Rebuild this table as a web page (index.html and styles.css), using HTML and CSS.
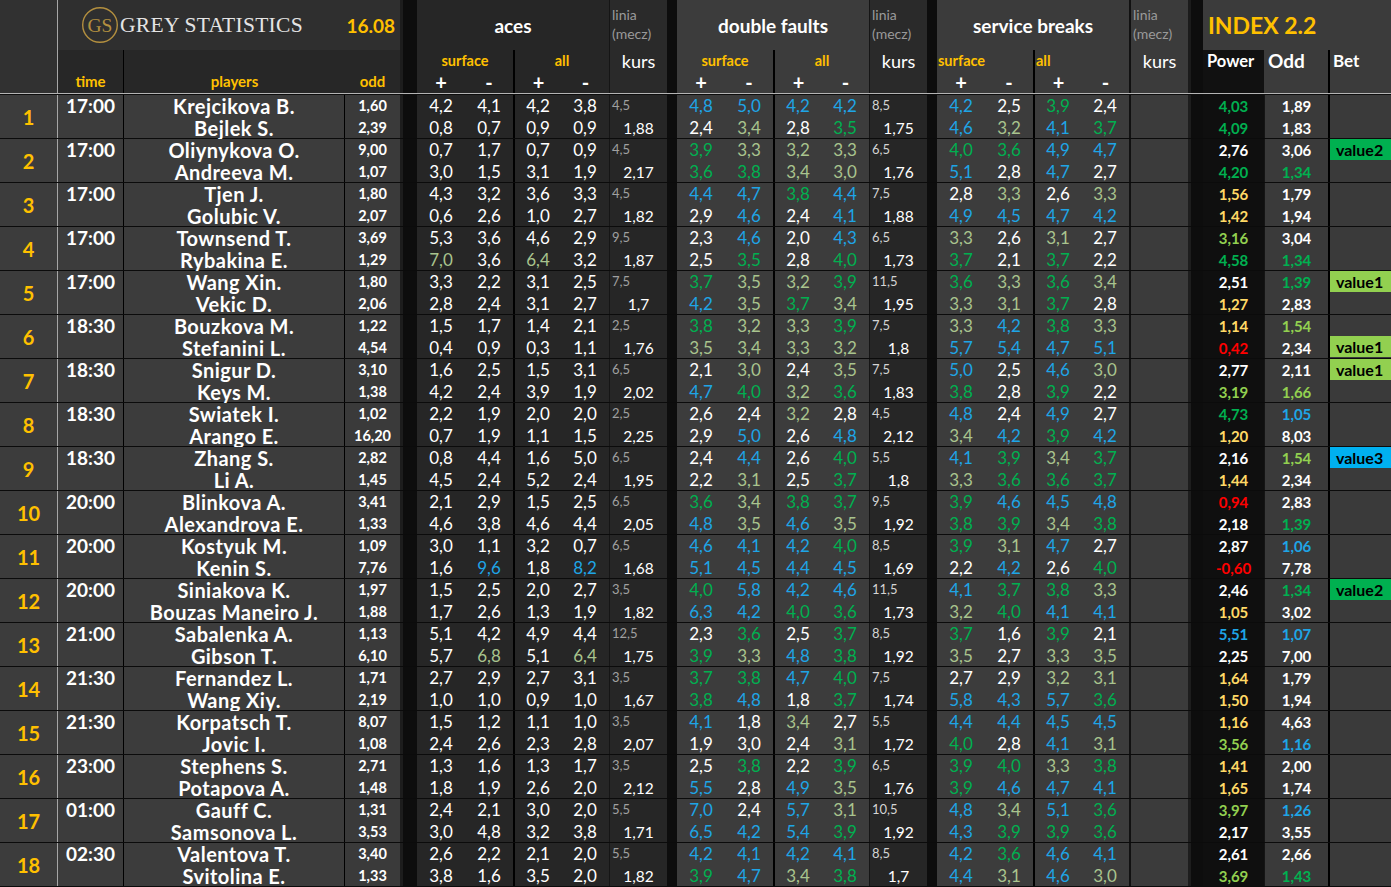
FILE: index.html
```html
<!DOCTYPE html>
<html lang="en">
<head>
<meta charset="utf-8">
<title>Grey Statistics</title>
<link rel="stylesheet" href="styles.css">
</head>
<body>
<div class="sheet">
<div class="cols head">
  <div class="hx"></div>
  <div class="htitle">
    <svg class="logo" viewBox="0 0 38 38"><circle cx="19" cy="19" r="17.3" fill="none" stroke="#b38f3f" stroke-width="1.4"/><text x="19" y="26" text-anchor="middle" font-family="Liberation Serif, serif" font-size="19.5" fill="#b38f3f">GS</text></svg>
    <span class="brand">GREY STATISTICS</span>
    <span class="date">16.08</span>
  </div>
  <div class="hlab t">time</div>
  <div class="hlab p">players</div>
  <div class="hlab o">odd</div>
  <div class="hgap g1"></div>
  <div class="hgrp ac">aces</div>
  <div class="hsub c6"><div class="lbl">surface</div><div class="pm"><span>+</span><span>-</span></div></div>
  <div class="hsub c8 dv"><div class="lbl">all</div><div class="pm"><span>+</span><span>-</span></div></div>
  <div class="hlin l1">linia<br>(mecz)</div>
  <div class="hkurs k1">kurs</div>
  <div class="hgap g2"></div>
  <div class="hgrp df">double faults</div>
  <div class="hsub c12"><div class="lbl">surface</div><div class="pm"><span>+</span><span>-</span></div></div>
  <div class="hsub c14 dv"><div class="lbl">all</div><div class="pm"><span>+</span><span>-</span></div></div>
  <div class="hlin l2">linia<br>(mecz)</div>
  <div class="hkurs k2">kurs</div>
  <div class="hgap g3"></div>
  <div class="hgrp sb">service breaks</div>
  <div class="hsub c18 left"><div class="lbl">surface</div><div class="pm"><span>+</span><span>-</span></div></div>
  <div class="hsub c20 dv left"><div class="lbl">all</div><div class="pm"><span>+</span><span>-</span></div></div>
  <div class="hlin l3">linia<br>(mecz)</div>
  <div class="hkurs k3">kurs</div>
  <div class="hgap g4"></div>
  <div class="hidx">INDEX 2.2</div>
  <div class="hpow">Power</div>
  <div class="hodd">Odd</div>
  <div class="hbet">Bet</div>
</div>
<div class="hline"></div>

<div class="cols row">
<div class="c ix">1</div><div class="c tm"><span>17:00</span></div>
<div class="c pl"><span>Krejcikova B.</span><span>Bejlek S.</span></div>
<div class="c od"><span>1,60</span><span>2,39</span></div><div class="c gp"></div>
<div class="c a"><span>4,2</span><span>0,8</span></div><div class="c a"><span>4,1</span><span>0,7</span></div><div class="c a d"><span>4,2</span><span>0,9</span></div><div class="c a"><span>3,8</span><span>0,9</span></div>
<div class="c k"><span class="ln">4,5</span><span>1,88</span></div><div class="c gq"></div>
<div class="c f"><span class="B">4,8</span><span>2,4</span></div><div class="c f"><span class="B">5,0</span><span class="O">3,4</span></div><div class="c f d"><span class="B">4,2</span><span>2,8</span></div><div class="c f"><span class="B">4,2</span><span class="G">3,5</span></div>
<div class="c k kd"><span class="ln">8,5</span><span>1,75</span></div><div class="c gq"></div>
<div class="c f"><span class="B">4,2</span><span class="B">4,6</span></div><div class="c f"><span>2,5</span><span class="O">3,2</span></div><div class="c f d"><span class="G">3,9</span><span class="B">4,1</span></div><div class="c f"><span>2,4</span><span class="G">3,7</span></div>
<div class="c ks"></div><div class="c gp"></div>
<div class="c pw"><span class="G">4,03</span><span class="G">4,09</span></div><div class="c ox"><span>1,89</span><span>1,83</span></div><div class="c bt"><span></span><span></span></div>
</div>

<div class="cols row">
<div class="c ix">2</div><div class="c tm"><span>17:00</span></div>
<div class="c pl"><span>Oliynykova O.</span><span>Andreeva M.</span></div>
<div class="c od"><span>9,00</span><span>1,07</span></div><div class="c gp"></div>
<div class="c a"><span>0,7</span><span>3,0</span></div><div class="c a"><span>1,7</span><span>1,5</span></div><div class="c a d"><span>0,7</span><span>3,1</span></div><div class="c a"><span>0,9</span><span>1,9</span></div>
<div class="c k"><span class="ln">4,5</span><span>2,17</span></div><div class="c gq"></div>
<div class="c f"><span class="G">3,9</span><span class="G">3,6</span></div><div class="c f"><span class="O">3,3</span><span class="G">3,8</span></div><div class="c f d"><span class="O">3,2</span><span class="O">3,4</span></div><div class="c f"><span class="O">3,3</span><span class="O">3,0</span></div>
<div class="c k kd"><span class="ln">6,5</span><span>1,76</span></div><div class="c gq"></div>
<div class="c f"><span class="G">4,0</span><span class="B">5,1</span></div><div class="c f"><span class="G">3,6</span><span>2,8</span></div><div class="c f d"><span class="B">4,9</span><span class="B">4,7</span></div><div class="c f"><span class="B">4,7</span><span>2,7</span></div>
<div class="c ks"></div><div class="c gp"></div>
<div class="c pw"><span>2,76</span><span class="G">4,20</span></div><div class="c ox"><span>3,06</span><span class="G">1,34</span></div><div class="c bt"><span class="v2">value2</span><span></span></div>
</div>

<div class="cols row">
<div class="c ix">3</div><div class="c tm"><span>17:00</span></div>
<div class="c pl"><span>Tjen J.</span><span>Golubic V.</span></div>
<div class="c od"><span>1,80</span><span>2,07</span></div><div class="c gp"></div>
<div class="c a"><span>4,3</span><span>0,6</span></div><div class="c a"><span>3,2</span><span>2,6</span></div><div class="c a d"><span>3,6</span><span>1,0</span></div><div class="c a"><span>3,3</span><span>2,7</span></div>
<div class="c k"><span class="ln">4,5</span><span>1,82</span></div><div class="c gq"></div>
<div class="c f"><span class="B">4,4</span><span>2,9</span></div><div class="c f"><span class="B">4,7</span><span class="B">4,6</span></div><div class="c f d"><span class="G">3,8</span><span>2,4</span></div><div class="c f"><span class="B">4,4</span><span class="B">4,1</span></div>
<div class="c k kd"><span class="ln">7,5</span><span>1,88</span></div><div class="c gq"></div>
<div class="c f"><span>2,8</span><span class="B">4,9</span></div><div class="c f"><span class="O">3,3</span><span class="B">4,5</span></div><div class="c f d"><span>2,6</span><span class="B">4,7</span></div><div class="c f"><span class="O">3,3</span><span class="B">4,2</span></div>
<div class="c ks"></div><div class="c gp"></div>
<div class="c pw"><span class="Y">1,56</span><span class="Y">1,42</span></div><div class="c ox"><span>1,79</span><span>1,94</span></div><div class="c bt"><span></span><span></span></div>
</div>

<div class="cols row">
<div class="c ix">4</div><div class="c tm"><span>17:00</span></div>
<div class="c pl"><span>Townsend T.</span><span>Rybakina E.</span></div>
<div class="c od"><span>3,69</span><span>1,29</span></div><div class="c gp"></div>
<div class="c a"><span>5,3</span><span class="O">7,0</span></div><div class="c a"><span>3,6</span><span>3,6</span></div><div class="c a d"><span>4,6</span><span class="O">6,4</span></div><div class="c a"><span>2,9</span><span>3,2</span></div>
<div class="c k"><span class="ln">9,5</span><span>1,87</span></div><div class="c gq"></div>
<div class="c f"><span>2,3</span><span>2,5</span></div><div class="c f"><span class="B">4,6</span><span class="G">3,5</span></div><div class="c f d"><span>2,0</span><span>2,8</span></div><div class="c f"><span class="B">4,3</span><span class="G">4,0</span></div>
<div class="c k kd"><span class="ln">6,5</span><span>1,73</span></div><div class="c gq"></div>
<div class="c f"><span class="O">3,3</span><span class="G">3,7</span></div><div class="c f"><span>2,6</span><span>2,1</span></div><div class="c f d"><span class="O">3,1</span><span class="G">3,7</span></div><div class="c f"><span>2,7</span><span>2,2</span></div>
<div class="c ks"></div><div class="c gp"></div>
<div class="c pw"><span class="L">3,16</span><span class="G">4,58</span></div><div class="c ox"><span>3,04</span><span class="G">1,34</span></div><div class="c bt"><span></span><span></span></div>
</div>

<div class="cols row">
<div class="c ix">5</div><div class="c tm"><span>17:00</span></div>
<div class="c pl"><span>Wang Xin.</span><span>Vekic D.</span></div>
<div class="c od"><span>1,80</span><span>2,06</span></div><div class="c gp"></div>
<div class="c a"><span>3,3</span><span>2,8</span></div><div class="c a"><span>2,2</span><span>2,4</span></div><div class="c a d"><span>3,1</span><span>3,1</span></div><div class="c a"><span>2,5</span><span>2,7</span></div>
<div class="c k"><span class="ln">7,5</span><span>1,7</span></div><div class="c gq"></div>
<div class="c f"><span class="G">3,7</span><span class="B">4,2</span></div><div class="c f"><span class="O">3,5</span><span class="O">3,5</span></div><div class="c f d"><span class="O">3,2</span><span class="G">3,7</span></div><div class="c f"><span class="G">3,9</span><span class="O">3,4</span></div>
<div class="c k kd"><span class="ln">11,5</span><span>1,95</span></div><div class="c gq"></div>
<div class="c f"><span class="G">3,6</span><span class="O">3,3</span></div><div class="c f"><span class="O">3,3</span><span class="O">3,1</span></div><div class="c f d"><span class="G">3,6</span><span class="G">3,7</span></div><div class="c f"><span class="O">3,4</span><span>2,8</span></div>
<div class="c ks"></div><div class="c gp"></div>
<div class="c pw"><span>2,51</span><span class="Y">1,27</span></div><div class="c ox"><span class="G">1,39</span><span>2,83</span></div><div class="c bt"><span class="v1">value1</span><span></span></div>
</div>

<div class="cols row">
<div class="c ix">6</div><div class="c tm"><span>18:30</span></div>
<div class="c pl"><span>Bouzkova M.</span><span>Stefanini L.</span></div>
<div class="c od"><span>1,22</span><span>4,54</span></div><div class="c gp"></div>
<div class="c a"><span>1,5</span><span>0,4</span></div><div class="c a"><span>1,7</span><span>0,9</span></div><div class="c a d"><span>1,4</span><span>0,3</span></div><div class="c a"><span>2,1</span><span>1,1</span></div>
<div class="c k"><span class="ln">2,5</span><span>1,76</span></div><div class="c gq"></div>
<div class="c f"><span class="G">3,8</span><span class="O">3,5</span></div><div class="c f"><span class="O">3,2</span><span class="O">3,4</span></div><div class="c f d"><span class="O">3,3</span><span class="O">3,3</span></div><div class="c f"><span class="G">3,9</span><span class="O">3,2</span></div>
<div class="c k kd"><span class="ln">7,5</span><span>1,8</span></div><div class="c gq"></div>
<div class="c f"><span class="O">3,3</span><span class="B">5,7</span></div><div class="c f"><span class="B">4,2</span><span class="B">5,4</span></div><div class="c f d"><span class="G">3,8</span><span class="B">4,7</span></div><div class="c f"><span class="O">3,3</span><span class="B">5,1</span></div>
<div class="c ks"></div><div class="c gp"></div>
<div class="c pw"><span class="Y">1,14</span><span class="R">0,42</span></div><div class="c ox"><span class="L">1,54</span><span>2,34</span></div><div class="c bt"><span></span><span class="v1">value1</span></div>
</div>

<div class="cols row">
<div class="c ix">7</div><div class="c tm"><span>18:30</span></div>
<div class="c pl"><span>Snigur D.</span><span>Keys M.</span></div>
<div class="c od"><span>3,10</span><span>1,38</span></div><div class="c gp"></div>
<div class="c a"><span>1,6</span><span>4,2</span></div><div class="c a"><span>2,5</span><span>2,4</span></div><div class="c a d"><span>1,5</span><span>3,9</span></div><div class="c a"><span>3,1</span><span>1,9</span></div>
<div class="c k"><span class="ln">6,5</span><span>2,02</span></div><div class="c gq"></div>
<div class="c f"><span>2,1</span><span class="B">4,7</span></div><div class="c f"><span class="O">3,0</span><span class="G">4,0</span></div><div class="c f d"><span>2,4</span><span class="O">3,2</span></div><div class="c f"><span class="O">3,5</span><span class="G">3,6</span></div>
<div class="c k kd"><span class="ln">7,5</span><span>1,83</span></div><div class="c gq"></div>
<div class="c f"><span class="B">5,0</span><span class="G">3,8</span></div><div class="c f"><span>2,5</span><span>2,8</span></div><div class="c f d"><span class="B">4,6</span><span class="G">3,9</span></div><div class="c f"><span class="O">3,0</span><span>2,2</span></div>
<div class="c ks"></div><div class="c gp"></div>
<div class="c pw"><span>2,77</span><span class="L">3,19</span></div><div class="c ox"><span>2,11</span><span class="L">1,66</span></div><div class="c bt"><span class="v1">value1</span><span></span></div>
</div>

<div class="cols row">
<div class="c ix">8</div><div class="c tm"><span>18:30</span></div>
<div class="c pl"><span>Swiatek I.</span><span>Arango E.</span></div>
<div class="c od"><span>1,02</span><span>16,20</span></div><div class="c gp"></div>
<div class="c a"><span>2,2</span><span>0,7</span></div><div class="c a"><span>1,9</span><span>1,9</span></div><div class="c a d"><span>2,0</span><span>1,1</span></div><div class="c a"><span>2,0</span><span>1,5</span></div>
<div class="c k"><span class="ln">2,5</span><span>2,25</span></div><div class="c gq"></div>
<div class="c f"><span>2,6</span><span>2,9</span></div><div class="c f"><span>2,4</span><span class="B">5,0</span></div><div class="c f d"><span class="O">3,2</span><span>2,6</span></div><div class="c f"><span>2,8</span><span class="B">4,8</span></div>
<div class="c k kd"><span class="ln">4,5</span><span>2,12</span></div><div class="c gq"></div>
<div class="c f"><span class="B">4,8</span><span class="O">3,4</span></div><div class="c f"><span>2,4</span><span class="B">4,2</span></div><div class="c f d"><span class="B">4,9</span><span class="G">3,9</span></div><div class="c f"><span>2,7</span><span class="B">4,2</span></div>
<div class="c ks"></div><div class="c gp"></div>
<div class="c pw"><span class="G">4,73</span><span class="Y">1,20</span></div><div class="c ox"><span class="B">1,05</span><span>8,03</span></div><div class="c bt"><span></span><span></span></div>
</div>

<div class="cols row">
<div class="c ix">9</div><div class="c tm"><span>18:30</span></div>
<div class="c pl"><span>Zhang S.</span><span>Li A.</span></div>
<div class="c od"><span>2,82</span><span>1,45</span></div><div class="c gp"></div>
<div class="c a"><span>0,8</span><span>4,5</span></div><div class="c a"><span>4,4</span><span>2,4</span></div><div class="c a d"><span>1,6</span><span>5,2</span></div><div class="c a"><span>5,0</span><span>2,4</span></div>
<div class="c k"><span class="ln">6,5</span><span>1,95</span></div><div class="c gq"></div>
<div class="c f"><span>2,4</span><span>2,2</span></div><div class="c f"><span class="B">4,4</span><span class="O">3,1</span></div><div class="c f d"><span>2,6</span><span>2,5</span></div><div class="c f"><span class="G">4,0</span><span class="G">3,7</span></div>
<div class="c k kd"><span class="ln">5,5</span><span>1,8</span></div><div class="c gq"></div>
<div class="c f"><span class="B">4,1</span><span class="O">3,3</span></div><div class="c f"><span class="G">3,9</span><span class="G">3,6</span></div><div class="c f d"><span class="O">3,4</span><span class="G">3,6</span></div><div class="c f"><span class="G">3,7</span><span class="G">3,7</span></div>
<div class="c ks"></div><div class="c gp"></div>
<div class="c pw"><span>2,16</span><span class="Y">1,44</span></div><div class="c ox"><span class="L">1,54</span><span>2,34</span></div><div class="c bt"><span class="v3">value3</span><span></span></div>
</div>

<div class="cols row">
<div class="c ix">10</div><div class="c tm"><span>20:00</span></div>
<div class="c pl"><span>Blinkova A.</span><span>Alexandrova E.</span></div>
<div class="c od"><span>3,41</span><span>1,33</span></div><div class="c gp"></div>
<div class="c a"><span>2,1</span><span>4,6</span></div><div class="c a"><span>2,9</span><span>3,8</span></div><div class="c a d"><span>1,5</span><span>4,6</span></div><div class="c a"><span>2,5</span><span>4,4</span></div>
<div class="c k"><span class="ln">6,5</span><span>2,05</span></div><div class="c gq"></div>
<div class="c f"><span class="G">3,6</span><span class="B">4,8</span></div><div class="c f"><span class="O">3,4</span><span class="O">3,5</span></div><div class="c f d"><span class="G">3,8</span><span class="B">4,6</span></div><div class="c f"><span class="G">3,7</span><span class="O">3,5</span></div>
<div class="c k kd"><span class="ln">9,5</span><span>1,92</span></div><div class="c gq"></div>
<div class="c f"><span class="G">3,9</span><span class="G">3,8</span></div><div class="c f"><span class="B">4,6</span><span class="G">3,9</span></div><div class="c f d"><span class="B">4,5</span><span class="O">3,4</span></div><div class="c f"><span class="B">4,8</span><span class="G">3,8</span></div>
<div class="c ks"></div><div class="c gp"></div>
<div class="c pw"><span class="R">0,94</span><span>2,18</span></div><div class="c ox"><span>2,83</span><span class="G">1,39</span></div><div class="c bt"><span></span><span></span></div>
</div>

<div class="cols row">
<div class="c ix">11</div><div class="c tm"><span>20:00</span></div>
<div class="c pl"><span>Kostyuk M.</span><span>Kenin S.</span></div>
<div class="c od"><span>1,09</span><span>7,76</span></div><div class="c gp"></div>
<div class="c a"><span>3,0</span><span>1,6</span></div><div class="c a"><span>1,1</span><span class="B">9,6</span></div><div class="c a d"><span>3,2</span><span>1,8</span></div><div class="c a"><span>0,7</span><span class="B">8,2</span></div>
<div class="c k"><span class="ln">6,5</span><span>1,68</span></div><div class="c gq"></div>
<div class="c f"><span class="B">4,6</span><span class="B">5,1</span></div><div class="c f"><span class="B">4,1</span><span class="B">4,5</span></div><div class="c f d"><span class="B">4,2</span><span class="B">4,4</span></div><div class="c f"><span class="G">4,0</span><span class="B">4,5</span></div>
<div class="c k kd"><span class="ln">8,5</span><span>1,69</span></div><div class="c gq"></div>
<div class="c f"><span class="G">3,9</span><span>2,2</span></div><div class="c f"><span class="O">3,1</span><span class="B">4,2</span></div><div class="c f d"><span class="B">4,7</span><span>2,6</span></div><div class="c f"><span>2,7</span><span class="G">4,0</span></div>
<div class="c ks"></div><div class="c gp"></div>
<div class="c pw"><span>2,87</span><span class="R">-0,60</span></div><div class="c ox"><span class="B">1,06</span><span>7,78</span></div><div class="c bt"><span></span><span></span></div>
</div>

<div class="cols row">
<div class="c ix">12</div><div class="c tm"><span>20:00</span></div>
<div class="c pl"><span>Siniakova K.</span><span>Bouzas Maneiro J.</span></div>
<div class="c od"><span>1,97</span><span>1,88</span></div><div class="c gp"></div>
<div class="c a"><span>1,5</span><span>1,7</span></div><div class="c a"><span>2,5</span><span>2,6</span></div><div class="c a d"><span>2,0</span><span>1,3</span></div><div class="c a"><span>2,7</span><span>1,9</span></div>
<div class="c k"><span class="ln">3,5</span><span>1,82</span></div><div class="c gq"></div>
<div class="c f"><span class="G">4,0</span><span class="B">6,3</span></div><div class="c f"><span class="B">5,8</span><span class="B">4,2</span></div><div class="c f d"><span class="B">4,2</span><span class="G">4,0</span></div><div class="c f"><span class="B">4,6</span><span class="G">3,6</span></div>
<div class="c k kd"><span class="ln">11,5</span><span>1,73</span></div><div class="c gq"></div>
<div class="c f"><span class="B">4,1</span><span class="O">3,2</span></div><div class="c f"><span class="G">3,7</span><span class="G">4,0</span></div><div class="c f d"><span class="G">3,8</span><span class="B">4,1</span></div><div class="c f"><span class="O">3,3</span><span class="B">4,1</span></div>
<div class="c ks"></div><div class="c gp"></div>
<div class="c pw"><span>2,46</span><span class="Y">1,05</span></div><div class="c ox"><span class="G">1,34</span><span>3,02</span></div><div class="c bt"><span class="v2">value2</span><span></span></div>
</div>

<div class="cols row">
<div class="c ix">13</div><div class="c tm"><span>21:00</span></div>
<div class="c pl"><span>Sabalenka A.</span><span>Gibson T.</span></div>
<div class="c od"><span>1,13</span><span>6,10</span></div><div class="c gp"></div>
<div class="c a"><span>5,1</span><span>5,7</span></div><div class="c a"><span>4,2</span><span class="O">6,8</span></div><div class="c a d"><span>4,9</span><span>5,1</span></div><div class="c a"><span>4,4</span><span class="O">6,4</span></div>
<div class="c k"><span class="ln">12,5</span><span>1,75</span></div><div class="c gq"></div>
<div class="c f"><span>2,3</span><span class="G">3,9</span></div><div class="c f"><span class="G">3,6</span><span class="O">3,3</span></div><div class="c f d"><span>2,5</span><span class="B">4,8</span></div><div class="c f"><span class="G">3,7</span><span class="G">3,8</span></div>
<div class="c k kd"><span class="ln">8,5</span><span>1,92</span></div><div class="c gq"></div>
<div class="c f"><span class="G">3,7</span><span class="O">3,5</span></div><div class="c f"><span>1,6</span><span>2,7</span></div><div class="c f d"><span class="G">3,9</span><span class="O">3,3</span></div><div class="c f"><span>2,1</span><span class="O">3,5</span></div>
<div class="c ks"></div><div class="c gp"></div>
<div class="c pw"><span class="B">5,51</span><span>2,25</span></div><div class="c ox"><span class="B">1,07</span><span>7,00</span></div><div class="c bt"><span></span><span></span></div>
</div>

<div class="cols row">
<div class="c ix">14</div><div class="c tm"><span>21:30</span></div>
<div class="c pl"><span>Fernandez L.</span><span>Wang Xiy.</span></div>
<div class="c od"><span>1,71</span><span>2,19</span></div><div class="c gp"></div>
<div class="c a"><span>2,7</span><span>1,0</span></div><div class="c a"><span>2,9</span><span>1,0</span></div><div class="c a d"><span>2,7</span><span>0,9</span></div><div class="c a"><span>3,1</span><span>1,0</span></div>
<div class="c k"><span class="ln">3,5</span><span>1,67</span></div><div class="c gq"></div>
<div class="c f"><span class="G">3,7</span><span class="G">3,8</span></div><div class="c f"><span class="G">3,8</span><span class="B">4,8</span></div><div class="c f d"><span class="B">4,7</span><span>1,8</span></div><div class="c f"><span class="G">4,0</span><span class="G">3,7</span></div>
<div class="c k kd"><span class="ln">7,5</span><span>1,74</span></div><div class="c gq"></div>
<div class="c f"><span>2,7</span><span class="B">5,8</span></div><div class="c f"><span>2,9</span><span class="B">4,3</span></div><div class="c f d"><span class="O">3,2</span><span class="B">5,7</span></div><div class="c f"><span class="O">3,1</span><span class="G">3,6</span></div>
<div class="c ks"></div><div class="c gp"></div>
<div class="c pw"><span class="Y">1,64</span><span class="Y">1,50</span></div><div class="c ox"><span>1,79</span><span>1,94</span></div><div class="c bt"><span></span><span></span></div>
</div>

<div class="cols row">
<div class="c ix">15</div><div class="c tm"><span>21:30</span></div>
<div class="c pl"><span>Korpatsch T.</span><span>Jovic I.</span></div>
<div class="c od"><span>8,07</span><span>1,08</span></div><div class="c gp"></div>
<div class="c a"><span>1,5</span><span>2,4</span></div><div class="c a"><span>1,2</span><span>2,6</span></div><div class="c a d"><span>1,1</span><span>2,3</span></div><div class="c a"><span>1,0</span><span>2,8</span></div>
<div class="c k"><span class="ln">3,5</span><span>2,07</span></div><div class="c gq"></div>
<div class="c f"><span class="B">4,1</span><span>1,9</span></div><div class="c f"><span>1,8</span><span>3,0</span></div><div class="c f d"><span class="O">3,4</span><span>2,4</span></div><div class="c f"><span>2,7</span><span class="O">3,1</span></div>
<div class="c k kd"><span class="ln">5,5</span><span>1,72</span></div><div class="c gq"></div>
<div class="c f"><span class="B">4,4</span><span class="G">4,0</span></div><div class="c f"><span class="B">4,4</span><span>2,8</span></div><div class="c f d"><span class="B">4,5</span><span class="B">4,1</span></div><div class="c f"><span class="B">4,5</span><span class="O">3,1</span></div>
<div class="c ks"></div><div class="c gp"></div>
<div class="c pw"><span class="Y">1,16</span><span class="L">3,56</span></div><div class="c ox"><span>4,63</span><span class="B">1,16</span></div><div class="c bt"><span></span><span></span></div>
</div>

<div class="cols row">
<div class="c ix">16</div><div class="c tm"><span>23:00</span></div>
<div class="c pl"><span>Stephens S.</span><span>Potapova A.</span></div>
<div class="c od"><span>2,71</span><span>1,48</span></div><div class="c gp"></div>
<div class="c a"><span>1,3</span><span>1,8</span></div><div class="c a"><span>1,6</span><span>1,9</span></div><div class="c a d"><span>1,3</span><span>2,6</span></div><div class="c a"><span>1,7</span><span>2,0</span></div>
<div class="c k"><span class="ln">3,5</span><span>2,12</span></div><div class="c gq"></div>
<div class="c f"><span>2,5</span><span class="B">5,5</span></div><div class="c f"><span class="G">3,8</span><span>2,8</span></div><div class="c f d"><span>2,2</span><span class="B">4,9</span></div><div class="c f"><span class="G">3,9</span><span class="O">3,5</span></div>
<div class="c k kd"><span class="ln">6,5</span><span>1,76</span></div><div class="c gq"></div>
<div class="c f"><span class="G">3,9</span><span class="G">3,9</span></div><div class="c f"><span class="G">4,0</span><span class="B">4,6</span></div><div class="c f d"><span class="O">3,3</span><span class="B">4,7</span></div><div class="c f"><span class="G">3,8</span><span class="B">4,1</span></div>
<div class="c ks"></div><div class="c gp"></div>
<div class="c pw"><span class="Y">1,41</span><span class="Y">1,65</span></div><div class="c ox"><span>2,00</span><span>1,74</span></div><div class="c bt"><span></span><span></span></div>
</div>

<div class="cols row">
<div class="c ix">17</div><div class="c tm"><span>01:00</span></div>
<div class="c pl"><span>Gauff C.</span><span>Samsonova L.</span></div>
<div class="c od"><span>1,31</span><span>3,53</span></div><div class="c gp"></div>
<div class="c a"><span>2,4</span><span>3,0</span></div><div class="c a"><span>2,1</span><span>4,8</span></div><div class="c a d"><span>3,0</span><span>3,2</span></div><div class="c a"><span>2,0</span><span>3,8</span></div>
<div class="c k"><span class="ln">5,5</span><span>1,71</span></div><div class="c gq"></div>
<div class="c f"><span class="B">7,0</span><span class="B">6,5</span></div><div class="c f"><span>2,4</span><span class="B">4,2</span></div><div class="c f d"><span class="B">5,7</span><span class="B">5,4</span></div><div class="c f"><span class="O">3,1</span><span class="G">3,9</span></div>
<div class="c k kd"><span class="ln">10,5</span><span>1,92</span></div><div class="c gq"></div>
<div class="c f"><span class="B">4,8</span><span class="B">4,3</span></div><div class="c f"><span class="O">3,4</span><span class="G">3,9</span></div><div class="c f d"><span class="B">5,1</span><span class="G">3,9</span></div><div class="c f"><span class="G">3,6</span><span class="G">3,6</span></div>
<div class="c ks"></div><div class="c gp"></div>
<div class="c pw"><span class="L">3,97</span><span>2,17</span></div><div class="c ox"><span class="B">1,26</span><span>3,55</span></div><div class="c bt"><span></span><span></span></div>
</div>

<div class="cols row">
<div class="c ix">18</div><div class="c tm"><span>02:30</span></div>
<div class="c pl"><span>Valentova T.</span><span>Svitolina E.</span></div>
<div class="c od"><span>3,40</span><span>1,33</span></div><div class="c gp"></div>
<div class="c a"><span>2,6</span><span>3,8</span></div><div class="c a"><span>2,2</span><span>1,6</span></div><div class="c a d"><span>2,1</span><span>3,5</span></div><div class="c a"><span>2,0</span><span>2,0</span></div>
<div class="c k"><span class="ln">5,5</span><span>1,82</span></div><div class="c gq"></div>
<div class="c f"><span class="B">4,2</span><span class="G">3,9</span></div><div class="c f"><span class="B">4,1</span><span class="B">4,7</span></div><div class="c f d"><span class="B">4,2</span><span class="O">3,4</span></div><div class="c f"><span class="B">4,1</span><span class="G">3,8</span></div>
<div class="c k kd"><span class="ln">8,5</span><span>1,7</span></div><div class="c gq"></div>
<div class="c f"><span class="B">4,2</span><span class="B">4,4</span></div><div class="c f"><span class="G">3,6</span><span class="O">3,1</span></div><div class="c f d"><span class="B">4,6</span><span class="B">4,6</span></div><div class="c f"><span class="B">4,1</span><span class="O">3,0</span></div>
<div class="c ks"></div><div class="c gp"></div>
<div class="c pw"><span>2,61</span><span class="L">3,69</span></div><div class="c ox"><span>2,66</span><span class="G">1,43</span></div><div class="c bt"><span></span><span></span></div>
</div>
</div>
</body>
</html>
```

FILE: styles.css
```css
* { box-sizing: border-box; margin: 0; padding: 0; }
html, body { background: #3c3c3c; }
body {
  width: 1391px;
  height: 887px;
  overflow: hidden;
  font-family: Lato, "Liberation Sans", sans-serif;
  color: #ffffff;
}
.sheet { width: 1391px; }
.cols {
  display: grid;
  grid-template-columns: 58px 66px 221px 55px 17px 48px 48px 48px 48px 58px 10px 48px 48px 48px 48px 58px 10px 48px 48px 48px 48px 59px 15px 61px 64px 63px;
}

/* ---------- header ---------- */
.head { grid-template-rows: 50px 43px; height: 93px; }
.hline { height: 2px; border-top: 1px solid #b4b4b4; background: #0d0d0d; }

.hx { grid-column: 1; grid-row: 1 / 3; background: #313131; border-right: 1px solid #a6a6a6; }
.htitle {
  grid-column: 2 / 5; grid-row: 1;
  background: #2f2f2f;
  display: flex; align-items: center;
  padding: 0 5px 0 23px;
}
.logo { width: 38px; height: 38px; flex: none; }
.brand {
  font-family: "Liberation Serif", serif;
  font-size: 21.5px;
  color: #e4e4e4;
  margin-left: 1px;
  letter-spacing: 0.3px;
}
.date { margin-left: auto; color: #ffc000; font-weight: 700; font-size: 19px; }

.hlab {
  grid-row: 2;
  background: #272727;
  display: flex; align-items: flex-end; justify-content: center;
  padding-bottom: 1px;
  color: #ffc000; font-weight: 700; font-size: 15px; line-height: 22px;
}
.hlab.t { grid-column: 2; border-right: 1px solid #000; }
.hlab.p { grid-column: 3; }
.hlab.o { grid-column: 4; }

.hgap { grid-row: 1 / 3; background: #0d0d0d; }
.hgap.g1 { grid-column: 5; border-left: 3px solid #1d1d1d; }
.hgap.g2 { grid-column: 11; }
.hgap.g3 { grid-column: 17; }
.hgap.g4 { grid-column: 23; border-left: 3px solid #1b1b1b; }

.hgrp {
  grid-row: 1;
  display: flex; align-items: center; justify-content: center;
  font-weight: 700; font-size: 19px;
}
.hgrp.ac { grid-column: 6 / 10; background: #262626; }
.hgrp.df { grid-column: 12 / 16; background: #3c3c3c; }
.hgrp.sb { grid-column: 18 / 22; background: #3b3b3b; }

.hsub { grid-row: 2; display: flex; flex-direction: column; }
.hsub.c6 { grid-column: 6 / 8; background: #262626; }
.hsub.c8 { grid-column: 8 / 10; background: #262626; }
.hsub.c12 { grid-column: 12 / 14; background: #3c3c3c; }
.hsub.c14 { grid-column: 14 / 16; background: #3c3c3c; }
.hsub.c18 { grid-column: 18 / 20; background: #3b3b3b; }
.hsub.c20 { grid-column: 20 / 22; background: #3b3b3b; }
.hsub.dv { border-left: 2px solid #000; }
.hsub .lbl {
  height: 22px; line-height: 22px; text-align: center;
  color: #ffc000; font-weight: 700; font-size: 14.5px;
}
.hsub.left .lbl { text-align: left; padding-left: 1px; }
.hsub .pm { display: flex; height: 21px; }
.hsub .pm span { flex: 1; text-align: center; font-weight: 700; font-size: 20px; line-height: 21px; }

.hlin {
  grid-row: 1;
  color: #9a9a9a; font-size: 14px; line-height: 19px;
  padding: 5px 0 0 2px;
  background: #2a2a2a; border-left: 1px solid #151515;
}
.hlin.l1 { grid-column: 10; }
.hlin.l2 { grid-column: 16; }
.hlin.l3 { grid-column: 22; background: #3b3b3b; border-left: 2px solid #111; }
.hkurs {
  grid-row: 2;
  font-size: 18px; line-height: 22px; text-align: center;
  background: #2a2a2a; border-left: 1px solid #151515;
}
.hkurs.k1 { grid-column: 10; }
.hkurs.k2 { grid-column: 16; }
.hkurs.k3 { grid-column: 22; background: #3b3b3b; border-left: 2px solid #111; }

.hidx {
  grid-column: 24 / 27; grid-row: 1;
  background: #3b3b3b;
  color: #ffc000; font-weight: 700; font-size: 23px;
  display: flex; align-items: center; padding-left: 5px;
}
.hpow { grid-column: 24; grid-row: 2; background: #111111; font-weight: 700; font-size: 16.5px; line-height: 22px; padding-left: 4px; }
.hodd { grid-column: 25; grid-row: 2; background: #3b3b3b; font-weight: 700; font-size: 19px; line-height: 22px; padding-left: 4px; }
.hbet { grid-column: 26; grid-row: 2; background: #3b3b3b; border-left: 2px solid #000; font-weight: 700; font-size: 17px; line-height: 22px; padding-left: 3px; }

/* ---------- data rows ---------- */
.row { height: 44px; border-bottom: 1px solid #0b0b0b; }
.c { display: flex; flex-direction: column; height: 43px; }
.c span { display: block; height: 22px; line-height: 22px; text-align: center; white-space: nowrap; }
.c span:last-child { height: 21px; }

.ix {
  background: #3c3c3c; border-right: 1px solid #a6a6a6;
  color: #ffc000; font-weight: 700; font-size: 20px;
  align-items: center; justify-content: center;
}
.tm { background: #3c3c3c; border-right: 1px solid #000; font-weight: 700; font-size: 19px; }
.pl { background: #3c3c3c; border-right: 1px solid #000; font-weight: 700; font-size: 20px; letter-spacing: 0.45px; }
.od { background: #3a3a3a; font-weight: 700; font-size: 14.5px; }
.gp { background: #0d0d0d; border-left: 3px solid #1d1d1d; }
.gq { background: #0d0d0d; }
.a { background: #262626; font-size: 17px; }
.f { background: #3c3c3c; font-size: 17px; }
.d { border-left: 2px solid #000; }
.k { background: #262626; border-left: 1px solid #151515; font-size: 15.5px; }
.k .ln { font-size: 13px; text-align: left; padding-left: 2px; color: #a0a0a0; line-height: 20px; }
.kd .ln { color: #d4d4d4; }
.ks { background: #3b3b3b; border-left: 2px solid #111; }
.pw { background: #0f0f0f; font-weight: 700; font-size: 15px; }
.ox { background: #3a3a3a; border-left: 1px solid #151515; font-weight: 700; font-size: 15px; }
.bt { background: #3a3a3a; border-left: 2px solid #000; }
.bt span, .bt span:last-child { height: 21px; line-height: 21px; margin-bottom: 1px; text-align: left; padding-left: 6px; color: #000; font-weight: 700; font-size: 16px; }
.bt .v1 { background: #92d050; }
.bt .v2 { background: #00b050; }
.bt .v3 { background: #00b0f0; }

.B { color: #1ea5e6; }
.G { color: #00b050; }
.O { color: #a9c48e; }
.Y { color: #ffd966; }
.L { color: #92d050; }
.R { color: #ff0000; }
```
